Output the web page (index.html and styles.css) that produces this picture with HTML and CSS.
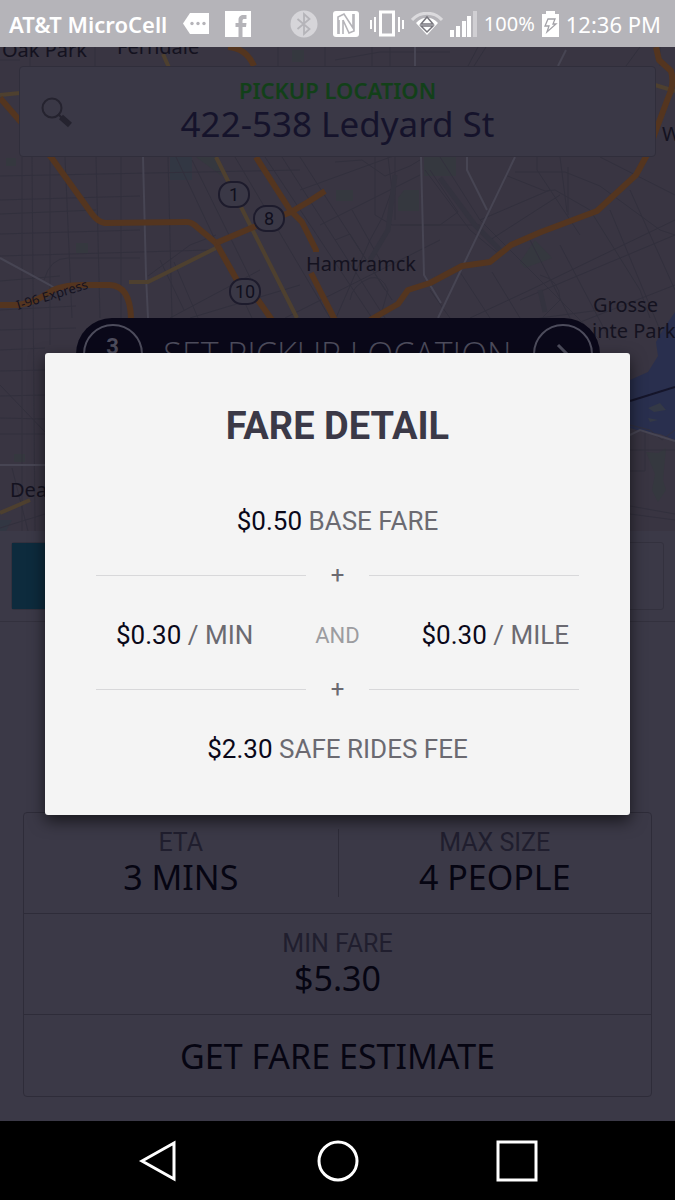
FILE: index.html
```
<!DOCTYPE html>
<html lang="en">
<head>
    <meta charset="UTF-8">
    <meta name="viewport" content="width=device-width, initial-scale=1.0">
    <title>Fare Detail</title>
    <link rel="stylesheet" href="styles.css">
</head>
<body>

<header class="status-bar">
    <div class="status-left">
        <span class="carrier">AT&amp;T MicroCell</span>
        <svg class="icon-message" viewBox="0 0 26 21" width="26" height="21">
            <path d="M0 10.500 7 0H26V21H7Z" fill="#fff"/>
            <g fill="#b5b4b9"><circle cx="9" cy="10.500" r="1.700"/><circle cx="15" cy="10.500" r="1.700"/><circle cx="21" cy="10.500" r="1.700"/></g>
        </svg>
        <svg viewBox="0 0 26 26" width="26" height="26">
            <path d="M0 0H26V26H0Z" fill="#fff"/>
            <path d="M13.500 26V16H10.500V12H13.500V9C13.500 5.500 15.500 4 18.500 4H21.500V8H19.500C18 8 17.500 8.500 17.500 10V12H21.500L21 16H17.500V26Z" fill="#b5b4b9"/>
        </svg>
    </div>
    <div class="status-right">
        <svg class="icon-bluetooth" viewBox="0 0 28 28" width="28" height="28">
            <circle cx="14" cy="14" r="13.500" fill="#d6d5d9"/>
            <path d="M7.500 9 19.500 19 14 24V4L19.500 9 7.500 19" fill="none" stroke="#b5b4b9" stroke-width="1.800"/>
        </svg>
        <svg class="icon-nfc" viewBox="0 0 26 26" width="26" height="26">
            <rect width="26" height="26" rx="3" fill="#fff"/>
            <path d="M5 23V6L11 3 20 17V3" fill="none" stroke="#b5b4b9" stroke-width="1.600"/>
            <path d="M6 9V23M10 9 16 22 21 20V3M10 9V23" fill="none" stroke="#b5b4b9" stroke-width="1.600"/>
        </svg>
        <svg class="icon-vibrate" viewBox="0 0 34 27" width="34" height="27">
            <rect x="10.500" y="2" width="13" height="23" fill="none" stroke="#fff" stroke-width="3"/>
            <path d="M1 10V19M5 7V22M29 7V22M33 10V19" stroke="#fff" stroke-width="2"/>
        </svg>
        <svg viewBox="0 0 32 23" width="32" height="23">
            <path d="M1 8C9-1 23-1 31 8" fill="none" stroke="#dbdadd" stroke-width="3"/>
            <path d="M5 11C11 4 21 4 27 11L16 23Z" fill="#fff"/>
            <path d="M10 12 16 5 22 12ZM10 14 16 20 22 14Z" fill="#fff" stroke="#77767d" stroke-width="1.500"/>
        </svg>
        <svg viewBox="0 0 27 26" width="27" height="26">
            <path d="M0 19H4V26H0ZM6 15H10V26H6ZM12 10H16V26H12ZM17 5H21V26H17Z" fill="#fff"/>
            <path d="M23 0H27V26H23Z" fill="#d0cfd3"/>
        </svg>
        <span class="battery">100%</span>
        <svg viewBox="0 0 17 26" width="17" height="26">
            <path d="M4 0H13V3H17V26H0V3H4Z" fill="#fff"/>
            <path d="M6 8H13L11 13H14L5 21 7 15H3Z" fill="none" stroke="#a3a2a8" stroke-width="1.300"/>
        </svg>
        <time class="clock">12:36 PM</time>
    </div>
</header>

<main class="app">
    <section class="map">
        <svg class="map-canvas" viewBox="0 47 675 484" preserveAspectRatio="xMidYMin slice">
            <!-- parks -->
            <g fill="#35383f">
                <path d="M424 157H456V176H424ZM336 190H353V201H336ZM398 198 404 190H419V211H398ZM76 243H88V253H76ZM196 157H216L222 176ZM520 262 535 240 552 258 525 268ZM6 158H16V166H6ZM14 454H25V462H14ZM292 50H304V62H292Z"/>
                <path d="M646 452 658 453 666 448 663 480 666 490 658 502 652 490 655 474Z"/>
                <path d="M170 157H192V180H170Z" fill="#323743"/>
                <path d="M0 520 12 520 6 531H0Z" fill="#323743"/>
            </g>
            <!-- lake -->
            <path d="M675 312 664 328 656 342 658 356 648 372 630 380V428L640 431 660 434 675 440Z" fill="#292f4e"/>
            <path d="M648 408 660 403 666 410 654 412ZM648 418 658 420 650 422Z" fill="#343946"/>
            <path d="M630 401 675 387" stroke="#15152a" stroke-width="2"/>

            <!-- side streets -->
            <g class="street">
                <path d="M22 157V531M32 157 35 531M50 157V345M65 157 72 318M96 157 100 318M121 157V318M168 157 172 318M0 176 300 170M0 200 140 196M0 214 96 210M0 234 140 230M0 256 210 250M0 281 60 276M0 310 76 306M0 330 76 328M0 350 45 348M0 371 45 370M0 396 45 395M0 418 45 419M0 385 45 432M12 468 28 531M0 528 45 514M0 434 45 434"/>
                <path d="M192 160 270 318M176 157 252 318M235 157 330 318M265 157 372 318M282 157 385 318M300 157 392 300M148 276 190 245 216 235M160 260 184 310M174 262 198 318M44 280Q50 258 68 258H140M300 190 410 150M320 225 420 175M285 318 440 240M170 318 260 270M190 318 300 285"/>
                <path d="M335 162 362 160 385 176 410 166 420 160M375 157V215L392 225H440L458 212 430 170M388 157 392 190 382 218 370 240 336 318M395 157V220M352 210 380 260M400 225H480M335 240 350 234 385 290M440 157 480 220 510 250 600 340M425 170 470 230 500 255M505 175 545 191 555 190 590 210 640 290 650 318M515 172H565L600 186 660 230 675 235M537 157 537 170 580 235M560 157 567 212M568 167V215M600 157 675 195M480 220 550 190M490 240 560 195M520 300 675 235M560 330 675 285M470 318 530 290 675 220M500 350 540 318 600 310M610 210 660 330M630 190 675 290M560 245 610 340M530 240 570 318M492 272 520 318M460 272 490 318M430 290 450 318M350 300Q352 285 370 278 382 275 388 290L380 318M540 275Q560 280 560 300L542 318"/>
                <path d="M335 60 380 52H450M372 47V66M390 47V66M478 47 468 66M486 47 474 66M640 47 626 66M660 47V66M0 60H20M30 47V66M95 47V66M278 47V66M325 47V66M630 450H675M645 430V471H630M630 506 675 514M630 514 675 520M630 425 650 430 662 440 675 430"/>
            </g>
            <path d="M395 175 388 230 370 260M440 178 475 225 500 250M540 290 545 312" fill="none" stroke="#34333f" stroke-width="5"/>
            <g class="avenue">
                <path d="M143 157 146 275 148 318M0 258 50 285 60 292M421 157 424 275 441 303M515 157 438 318M467 157V170L487 210M415 47V66M566 50 558 66M0 465H45M630 435 640 430 675 441"/>
            </g>

            <!-- secondary highways -->
            <g class="road road-yellow">
                <path d="M163 54 170 70M0 95 20 93M216 157 240 205 297 318M129 282H148L216 248M655 85 675 91M0 513 30 500"/>
            </g>
            <!-- freeways -->
            <g class="road road-orange">
                <path d="M0 98 20 121 51 157 92 214Q98 222 105 223L187 222Q192 222 198 228L216 243 238 282 258 300 272 320"/>
                <path d="M228 47Q246 48 254 66M256 157 290 210 302 222 316 250V252M311 273 335 320M216 243 256 226 291 212 308 202 325 191"/>
                <path d="M0 305H18Q34 303 50 292 60 285 84 285H110Q130 286 131 318"/>
                <path d="M370 320 398 304 408 290 430 283 462 266 490 262 511 245 541 232 597 211 636 175 648 153 656 130 668 98Q675 84 671 71L659 60 656 47"/>
            </g>

            <!-- route shields -->
            <g class="shield">
                <rect x="219" y="182" width="30" height="25" rx="12"/>
                <rect x="254" y="206" width="30" height="25" rx="12"/>
                <rect x="230" y="279" width="30" height="25" rx="12"/>
            </g>
            <g class="shield-text">
                <text x="234" y="201">1</text>
                <text x="269" y="225">8</text>
                <text x="245" y="298">10</text>
            </g>

            <g class="place">
                <text x="2" y="57">Oak Park</text>
                <text x="117" y="54">Ferndale</text>
                <text x="306" y="271">Hamtramck</text>
                <text x="593" y="312">Grosse</text>
                <text x="592" y="338">inte Park</text>
                <text x="662" y="141">W</text>
                <text x="10" y="497">Dea</text>
                <text class="highway-name" x="18" y="310" transform="rotate(-17 18 310)">I-96 Express</text>
            </g>
        </svg>

        <div class="search-card">
            <svg class="icon-search" viewBox="0 0 32 32" width="32" height="32">
                <circle cx="11" cy="11" r="9.500" fill="none" stroke="#25232f" stroke-width="2"/>
                <path d="M17 17 21 21" stroke="#25232f" stroke-width="2"/>
                <path d="M20 20 29 28" stroke="#25232f" stroke-width="6"/>
            </svg>
            <label for="pickup">PICKUP LOCATION</label>
            <input type="text" id="pickup" value="422-538 Ledyard St">
        </div>

        <button class="set-pickup" type="button">
            <span class="ring">3</span>
            <span class="set-pickup-text">SET PICKUP LOCATION</span>
            <span class="ring">
                <svg viewBox="0 0 16 24" width="16" height="24"><path d="M3 3 12 12 3 21" fill="none" stroke="#4d4c5c" stroke-width="3"/></svg>
            </span>
        </button>
    </section>

    <section class="vehicles">
        <div class="vehicle-track">
            <div class="vehicle-selected"></div>
        </div>
    </section>

    <section class="ride-card">
        <div class="ride-row ride-split">
            <div class="ride-cell">
                <span class="ride-label">ETA</span>
                <span class="ride-value">3 MINS</span>
            </div>
            <div class="ride-cell">
                <span class="ride-label">MAX SIZE</span>
                <span class="ride-value">4 PEOPLE</span>
            </div>
        </div>
        <div class="ride-row">
            <div class="ride-cell">
                <span class="ride-label">MIN FARE</span>
                <span class="ride-value">$5.30</span>
            </div>
        </div>
        <button class="estimate" type="button">GET FARE ESTIMATE</button>
    </section>

    <!-- fare popup, sits over the whole app area -->
    <div class="modal-layer">
        <div class="modal" role="dialog" aria-labelledby="fareTitle">
            <h1 id="fareTitle">FARE DETAIL</h1>
            <p class="fare"><b>$0.50</b> BASE FARE</p>
            <div class="plus">+</div>
            <div class="fare-split">
                <p class="fare"><b>$0.30</b> / MIN</p>
                <span class="and">AND</span>
                <p class="fare"><b>$0.30</b> / MILE</p>
            </div>
            <div class="plus">+</div>
            <p class="fare"><b>$2.30</b> SAFE RIDES FEE</p>
        </div>
    </div>
</main>

<nav class="nav-bar">
    <button type="button" aria-label="Back">
        <svg viewBox="0 0 42 42" width="42" height="42"><path d="M5 21 37 3V39Z"/></svg>
    </button>
    <button type="button" aria-label="Home">
        <svg viewBox="0 0 42 42" width="42" height="42"><circle cx="21" cy="21" r="19"/></svg>
    </button>
    <button type="button" aria-label="Recent apps">
        <svg viewBox="0 0 42 42" width="42" height="42"><rect x="2" y="2" width="38" height="38"/></svg>
    </button>
</nav>

</body>
</html>
```
FILE: styles.css
```
* {
    box-sizing: border-box;
}

body {
    margin: 0;
    min-height: 100vh;
    display: flex;
    flex-direction: column;
    background-color: #3b3947;
    font-family: Roboto, sans-serif;
}

button,
input {
    font-family: inherit;
    border: none;
    background: none;
    padding: 0;
    margin: 0;
}

svg {
    display: block;
    flex-shrink: 0;
}

/* Status bar */
.status-bar {
    height: 47px;
    padding: 0 14px 0 9px;
    display: flex;
    justify-content: space-between;
    align-items: center;
    background-color: #b5b4b9;
    color: #fff;
    font-family: "Noto Sans", sans-serif;
    font-size: 22px;
    line-height: 26px;
    white-space: nowrap;
}

.status-left,
.status-right {
    display: flex;
    align-items: center;
}

.status-left {
    gap: 16px;
}

.status-right {
    gap: 7px;
}

.carrier {
    font-weight: 600;
}

.battery {
    font-size: 20px;
}

.icon-nfc {
    margin: 0 4px 0 8px;
}

/* Map */
.map {
    position: relative;
    height: 484px;
    padding: 19px 19px 0;
    overflow: hidden;
    background-color: #393542;
}

.map-canvas {
    position: absolute;
    top: 0;
    left: 0;
    width: 100%;
    height: 100%;
}

.street {
    fill: none;
    stroke: #32303d;
    stroke-width: 1;
}

.avenue {
    fill: none;
    stroke: #474553;
    stroke-width: 2;
}

.road {
    fill: none;
    stroke-linejoin: round;
}

.road-yellow {
    stroke: #4e402f;
    stroke-width: 4;
}

.road-orange {
    stroke: #54351f;
    stroke-width: 6;
}

.shield {
    fill: #3a3846;
    stroke: #1d1b2c;
    stroke-width: 2;
}

.shield-text {
    fill: #100f1d;
    font-size: 18px;
    text-anchor: middle;
}

.place {
    fill: #14121f;
    font-family: "Noto Sans", sans-serif;
    font-size: 20px;
}

.highway-name {
    font-size: 13px;
}

.search-card {
    position: relative;
    height: 91px;
    padding-top: 11px;
    display: flex;
    flex-direction: column;
    align-items: center;
    background-color: #3a3846;
    border: 1px solid #302e3b;
    border-radius: 4px;
}

.icon-search {
    position: absolute;
    top: 30px;
    left: 21px;
}

.search-card label {
    font-family: "Noto Sans", sans-serif;
    font-size: 22px;
    line-height: 24px;
    font-weight: 600;
    color: #124019;
}

.search-card input {
    width: 80%;
    height: 44px;
    text-align: center;
    font-family: "Noto Sans", sans-serif;
    font-size: 35px;
    line-height: 44px;
    color: #15132b;
}

.set-pickup {
    position: relative;
    width: calc(100% - 113px);
    height: 72px;
    margin: 161px auto 0;
    padding: 0 7px;
    display: flex;
    align-items: center;
    justify-content: space-between;
    background-color: #0a0819;
    border-radius: 36px;
    color: #4d4c5c;
}

.set-pickup-text {
    font-family: "Open Sans", sans-serif;
    font-size: 34px;
    font-weight: 300;
}

.ring {
    width: 60px;
    height: 60px;
    padding-bottom: 16px;
    display: flex;
    align-items: center;
    justify-content: center;
    border: 2px solid #4d4c5c;
    border-radius: 50%;
    font-size: 22px;
    font-weight: 700;
}

.ring svg {
    margin-bottom: -16px;
}

/* Vehicle selector */
.vehicles {
    padding: 11px;
    border-bottom: 1px solid #33313e;
}

.vehicle-track {
    height: 68px;
    border: 1px solid #33313e;
    border-radius: 3px;
}

.vehicle-selected {
    width: 33%;
    height: 100%;
    background-color: #0d2b3d;
}

/* Ride info */
.ride-card {
    margin: 190px 23px 24px;
    border: 1px solid #2e2c39;
    border-radius: 4px;
    text-align: center;
}

.ride-row {
    padding: 16px 0;
    border-bottom: 1px solid #2e2c39;
}

.ride-split {
    display: grid;
    grid-template-columns: 1fr 1fr;
}

.ride-cell + .ride-cell {
    border-left: 1px solid #2e2c39;
}

.ride-label,
.ride-value {
    display: block;
}

.ride-label {
    font-size: 25px;
    line-height: 28px;
    color: #201e2e;
}

.ride-value,
.estimate {
    font-family: "Noto Sans", sans-serif;
    font-size: 34px;
    line-height: 40px;
    color: #060512;
}

.estimate {
    width: 100%;
    height: 81px;
}

/* Fare popup */
.app {
    position: relative;
    flex: 1;
}

.modal-layer {
    position: absolute;
    top: 0;
    right: 0;
    bottom: 0;
    left: 0;
    padding: 0 45px;
    display: flex;
    align-items: center;
}

.modal {
    width: 100%;
    padding: 48px 51px;
    background-color: #f4f4f4;
    border-radius: 3px;
    box-shadow: 0 6px 16px rgba(0, 0, 0, 0.6);
    text-align: center;
}

.modal h1 {
    margin: 0 0 52px;
    font-size: 38px;
    line-height: 50px;
    font-weight: 700;
    color: #3b3947;
}

.fare {
    margin: 0;
    font-size: 26px;
    line-height: 36px;
    color: #6b6a71;
}

.fare b {
    font-weight: 400;
    color: #0a0819;
}

.plus {
    margin: 21px 0 27px;
    display: flex;
    align-items: center;
    gap: 25px;
    font-size: 24px;
    line-height: 30px;
    color: #6b6a71;
}

.plus::before,
.plus::after {
    content: "";
    flex: 1;
    height: 1px;
    background-color: #d8d8da;
}

.fare-split {
    padding: 0 10px 0 20px;
    display: flex;
    justify-content: space-between;
    align-items: center;
}

.and {
    font-size: 22px;
    color: #9c9ca0;
}

/* Android navigation */
.nav-bar {
    height: 79px;
    padding: 0 137px;
    display: flex;
    justify-content: space-between;
    align-items: center;
    background-color: #000;
}

.nav-bar button {
    cursor: pointer;
}

.nav-bar svg {
    fill: none;
    stroke: #fff;
    stroke-width: 3;
}
```
